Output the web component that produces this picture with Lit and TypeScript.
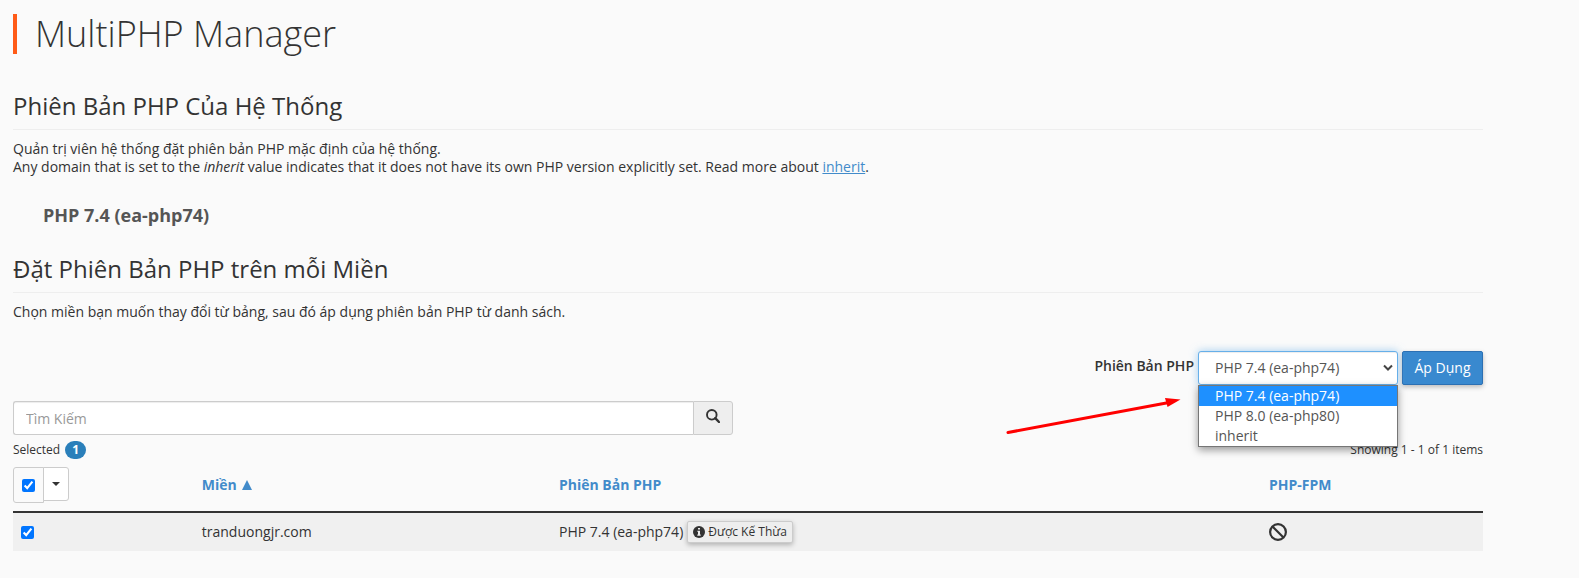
import { LitElement, html, css } from "lit";
import { customElement, state } from "lit/decorators.js";

interface DomainRow {
  domain: string;
  version: string;
  inherited: boolean;
}

const VERSIONS = ["PHP 7.4 (ea-php74)", "PHP 8.0 (ea-php80)", "inherit"];

@customElement("version-picker")
class VersionPicker extends LitElement {
  @state() private value = VERSIONS[0];

  static styles = css`
    :host {
      display: flex;
      justify-content: flex-end;
      align-items: center;
      gap: 4px;
      position: relative;
    }
    .label {
      font-weight: 600;
      padding-bottom: 4px;
    }
    .field {
      position: relative;
      width: 200px;
    }
    .select {
      display: block;
      box-sizing: border-box;
      width: 100%;
      height: 34px;
      padding: 0 24px 0 16px;
      appearance: none;
      border: 1px solid #66afe9;
      border-radius: 3px;
      outline: 0;
      background: #fff;
      color: #555;
      font: inherit;
      box-shadow: inset 0 1px 1px rgba(0, 0, 0, 0.075), 0 0 8px rgba(102, 175, 233, 0.6);
    }
    .chevron {
      position: absolute;
      right: 4px;
      top: 13px;
      pointer-events: none;
    }
    .menu {
      position: absolute;
      z-index: 2;
      top: 100%;
      left: 0;
      right: 0;
      margin: 0;
      padding: 0;
      list-style: none;
      background: #fff;
      border: 1px solid #767676;
      color: #555;
      line-height: 20px;
      box-shadow: 0 3px 8px rgba(0, 0, 0, 0.4);
    }
    .option {
      padding: 0 16px;
      cursor: default;
    }
    .option.active {
      background: #1e90ff;
      color: #fff;
    }
    .apply {
      width: 81px;
      height: 34px;
      padding: 0;
      border: 1px solid #2c70b3;
      border-radius: 2px;
      background: #3989cf;
      color: #fff;
      font: inherit;
      box-shadow: 0 2px 5px rgba(0, 0, 0, 0.26);
    }
    .pointer {
      position: absolute;
      right: 302px;
      top: 44px;
      pointer-events: none;
    }
  `;

  render() {
    return html`
      <label class="label" for="version">Phiên Bản PHP</label>
      <div class="field">
        <select
          class="select"
          id="version"
          @change=${(e: Event) => (this.value = (e.target as HTMLSelectElement).value)}
        >
          ${VERSIONS.map((v) => html`<option ?selected=${v === this.value}>${v}</option>`)}
        </select>
        <svg class="chevron" width="12" height="8" viewBox="0 0 12 8" aria-hidden="true">
          <path d="M2 1.5 6 5.5 10 1.5" fill="none" stroke="#444" stroke-width="2" />
        </svg>
        <ul class="menu" role="listbox" aria-label="Phiên Bản PHP">
          ${VERSIONS.map(
            (v) => html`<li
              class="option ${v === this.value ? "active" : ""}"
              role="option"
              aria-selected=${v === this.value}
              @click=${() => (this.value = v)}
            >${v}</li>`
          )}
        </ul>
      </div>
      <button class="apply" type="button">Áp Dụng</button>
      <svg class="pointer" width="176" height="42" viewBox="0 0 176 42" aria-hidden="true">
        <path d="M3 37.5 164 7.5" stroke="#f00" stroke-width="3" stroke-linecap="round" />
        <path d="M175.5 4.5 160 3 162.500 12Z" fill="#f00" />
      </svg>
    `;
  }
}

@customElement("domain-table")
class DomainTable extends LitElement {
  @state() private rows: DomainRow[] = [
    { domain: "tranduongjr.com", version: "PHP 7.4 (ea-php74)", inherited: true },
  ];

  static styles = css`
    :host {
      display: block;
    }
    .table {
      width: 100%;
      table-layout: fixed;
      border-collapse: collapse;
    }
    .col-check {
      width: 12.3%;
    }
    .col-domain {
      width: 24.3%;
    }
    .col-version {
      width: 48.3%;
    }
    th {
      height: 44px;
      padding: 0 8px;
      text-align: left;
      vertical-align: top;
      font-weight: 700;
      line-height: 36px;
      border-bottom: 2px solid #333;
    }
    .check-head {
      padding: 0;
    }
    td {
      height: 38px;
      padding: 0 8px;
      background: #f0f0f0;
    }
    .sort {
      color: #428bca;
      text-decoration: none;
    }
    .caret-up {
      margin-left: 2px;
    }
    .group {
      display: flex;
      align-items: flex-start;
    }
    .all {
      display: grid;
      place-items: center;
      box-sizing: border-box;
      width: 31px;
      height: 36px;
      border: 1px solid #ccc;
      border-radius: 3px 0 0 3px;
    }
    .toggle {
      display: grid;
      place-items: center;
      width: 26px;
      height: 34px;
      margin-left: -1px;
      padding: 0;
      border: 1px solid #ccc;
      border-radius: 0 3px 3px 0;
      background: #fff;
    }
    .check {
      display: block;
      width: 13px;
      height: 13px;
      margin: 0;
      accent-color: #0075ff;
    }
    .version {
      display: flex;
      align-items: center;
      gap: 4px;
    }
    .tag {
      display: inline-flex;
      align-items: center;
      gap: 3px;
      height: 22px;
      padding: 0 5px;
      border: 1px solid #ccc;
      border-radius: 2px;
      background: #eee;
      color: #333;
      font: inherit;
      font-size: 12px;
      box-shadow: 0 2px 5px rgba(0, 0, 0, 0.26);
    }
    .ban {
      display: block;
    }
  `;

  render() {
    return html`
      <table class="table">
        <colgroup>
          <col class="col-check" />
          <col class="col-domain" />
          <col class="col-version" />
          <col />
        </colgroup>
        <thead>
          <tr>
            <th class="check-head">
              <div class="group">
                <label class="all"><input class="check" type="checkbox" aria-label="Select all" checked /></label>
                <button class="toggle" type="button" aria-label="Selection options">
                  <svg width="8" height="4" viewBox="0 0 8 4"><path d="M0 0H8L4 4Z" fill="#333" /></svg>
                </button>
              </div>
            </th>
            <th>
              <a class="sort" href="#domain">Miền
                <svg class="caret-up" width="10" height="10" viewBox="0 0 10 10" aria-hidden="true">
                  <path d="M5 0 10 10H0Z" fill="#428bca" />
                </svg></a>
            </th>
            <th><a class="sort" href="#version">Phiên Bản PHP</a></th>
            <th><a class="sort" href="#fpm">PHP-FPM</a></th>
          </tr>
        </thead>
        <tbody>
          ${this.rows.map(
            (r) => html`<tr>
              <td><input class="check" type="checkbox" aria-label=${r.domain} checked /></td>
              <td>${r.domain}</td>
              <td>
                <div class="version">
                  <span>${r.version}</span>
                  ${r.inherited
                    ? html`<button class="tag" type="button">
                        <svg width="12" height="12" viewBox="0 0 12 12" aria-hidden="true">
                          <circle cx="6" cy="6" r="6" fill="#333" />
                          <path d="M5 2H7V3.600H5ZM4.300 4.700H7V8.500H7.700V9.700H4.300V8.500H5V5.800H4.300Z" fill="#eee" />
                        </svg>Được Kế Thừa</button>`
                    : ""}
                </div>
              </td>
              <td>
                <svg class="ban" width="18" height="18" viewBox="0 0 18 18" role="img" aria-label="Disabled">
                  <circle cx="9" cy="9" r="7.900" fill="none" stroke="#333" stroke-width="2.200" />
                  <path d="M3.500 3.500 14.500 14.500" stroke="#333" stroke-width="2.200" />
                </svg>
              </td>
            </tr>`
          )}
        </tbody>
      </table>
    `;
  }
}

@customElement("app-root")
class AppRoot extends LitElement {
  static styles = css`
    :host {
      display: block;
      box-sizing: border-box;
      min-height: 100vh;
      padding: 14px 96px 24px 13px;
      background: #fafafa;
      color: #333;
      font: 14px/18px "Open Sans", sans-serif;
    }
    .title {
      margin: 0 0 37px;
      padding-left: 18px;
      border-left: 4px solid #ff5b17;
      font-size: 36px;
      font-weight: 300;
      line-height: 40px;
    }
    .heading {
      margin: 0 0 10px;
      padding-bottom: 8px;
      border-bottom: 1px solid #eee;
      font-size: 24px;
      font-weight: 400;
      line-height: 30px;
    }
    .text {
      margin: 0;
    }
    .link {
      color: #428bca;
    }
    .current {
      margin: 28px 0;
      padding-left: 30px;
      color: #555;
      font-size: 18px;
      font-weight: 700;
      line-height: 22px;
    }
    .picker {
      margin: 30px 0 16px;
    }
    .search {
      display: flex;
      width: calc(50% - 15px);
    }
    .query {
      flex: 1;
      min-width: 0;
      box-sizing: border-box;
      height: 34px;
      padding: 0 12px;
      border: 1px solid #ccc;
      border-right: 0;
      border-radius: 3px 0 0 3px;
      background: #fff;
      color: #555;
      font: inherit;
      box-shadow: inset 0 1px 1px rgba(0, 0, 0, 0.075);
    }
    .query::placeholder {
      color: #999;
    }
    .go {
      display: grid;
      place-items: center;
      width: 40px;
      padding: 0 0 4px;
      border: 1px solid #ccc;
      border-radius: 0 3px 3px 0;
      background: #eee;
    }
    .status {
      display: flex;
      justify-content: space-between;
      align-items: center;
      margin: 6px 0 8px;
      font-size: 12px;
    }
    .selected {
      display: flex;
      gap: 5px;
    }
    .badge {
      min-width: 21px;
      border-radius: 10px;
      background: #2a7fba;
      color: #fff;
      font-weight: 700;
      text-align: center;
    }
  `;

  render() {
    return html`
      <main>
        <h1 class="title">MultiPHP Manager</h1>
        <section>
          <h2 class="heading">Phiên Bản PHP Của Hệ Thống</h2>
          <p class="text">Quản trị viên hệ thống đặt phiên bản PHP mặc định của hệ thống.</p>
          <p class="text">
            Any domain that is set to the <em>inherit</em> value indicates that it does not have its
            own PHP version explicitly set. Read more about <a class="link" href="#inherit">inherit</a>.
          </p>
          <p class="current">PHP 7.4 (ea-php74)</p>
        </section>
        <section>
          <h2 class="heading">Đặt Phiên Bản PHP trên mỗi Miền</h2>
          <p class="text">
            Chọn miền bạn muốn thay đổi từ bảng, sau đó áp dụng phiên bản PHP từ danh sách.
          </p>
          <version-picker class="picker"></version-picker>
          <div class="search">
            <input class="query" type="text" placeholder="Tìm Kiếm" aria-label="Tìm Kiếm" />
            <button class="go" type="button" aria-label="Tìm Kiếm">
              <svg width="14" height="14" viewBox="0 0 14 14" aria-hidden="true">
                <circle cx="5.800" cy="5.800" r="4.800" fill="none" stroke="#333" stroke-width="1.900" />
                <path d="M9.200 9.200 13 13" stroke="#333" stroke-width="2.400" stroke-linecap="round" />
              </svg>
            </button>
          </div>
          <div class="status">
            <span class="selected">Selected <span class="badge">1</span></span>
            <span>Showing 1 - 1 of 1 items</span>
          </div>
          <domain-table></domain-table>
        </section>
      </main>
    `;
  }
}
